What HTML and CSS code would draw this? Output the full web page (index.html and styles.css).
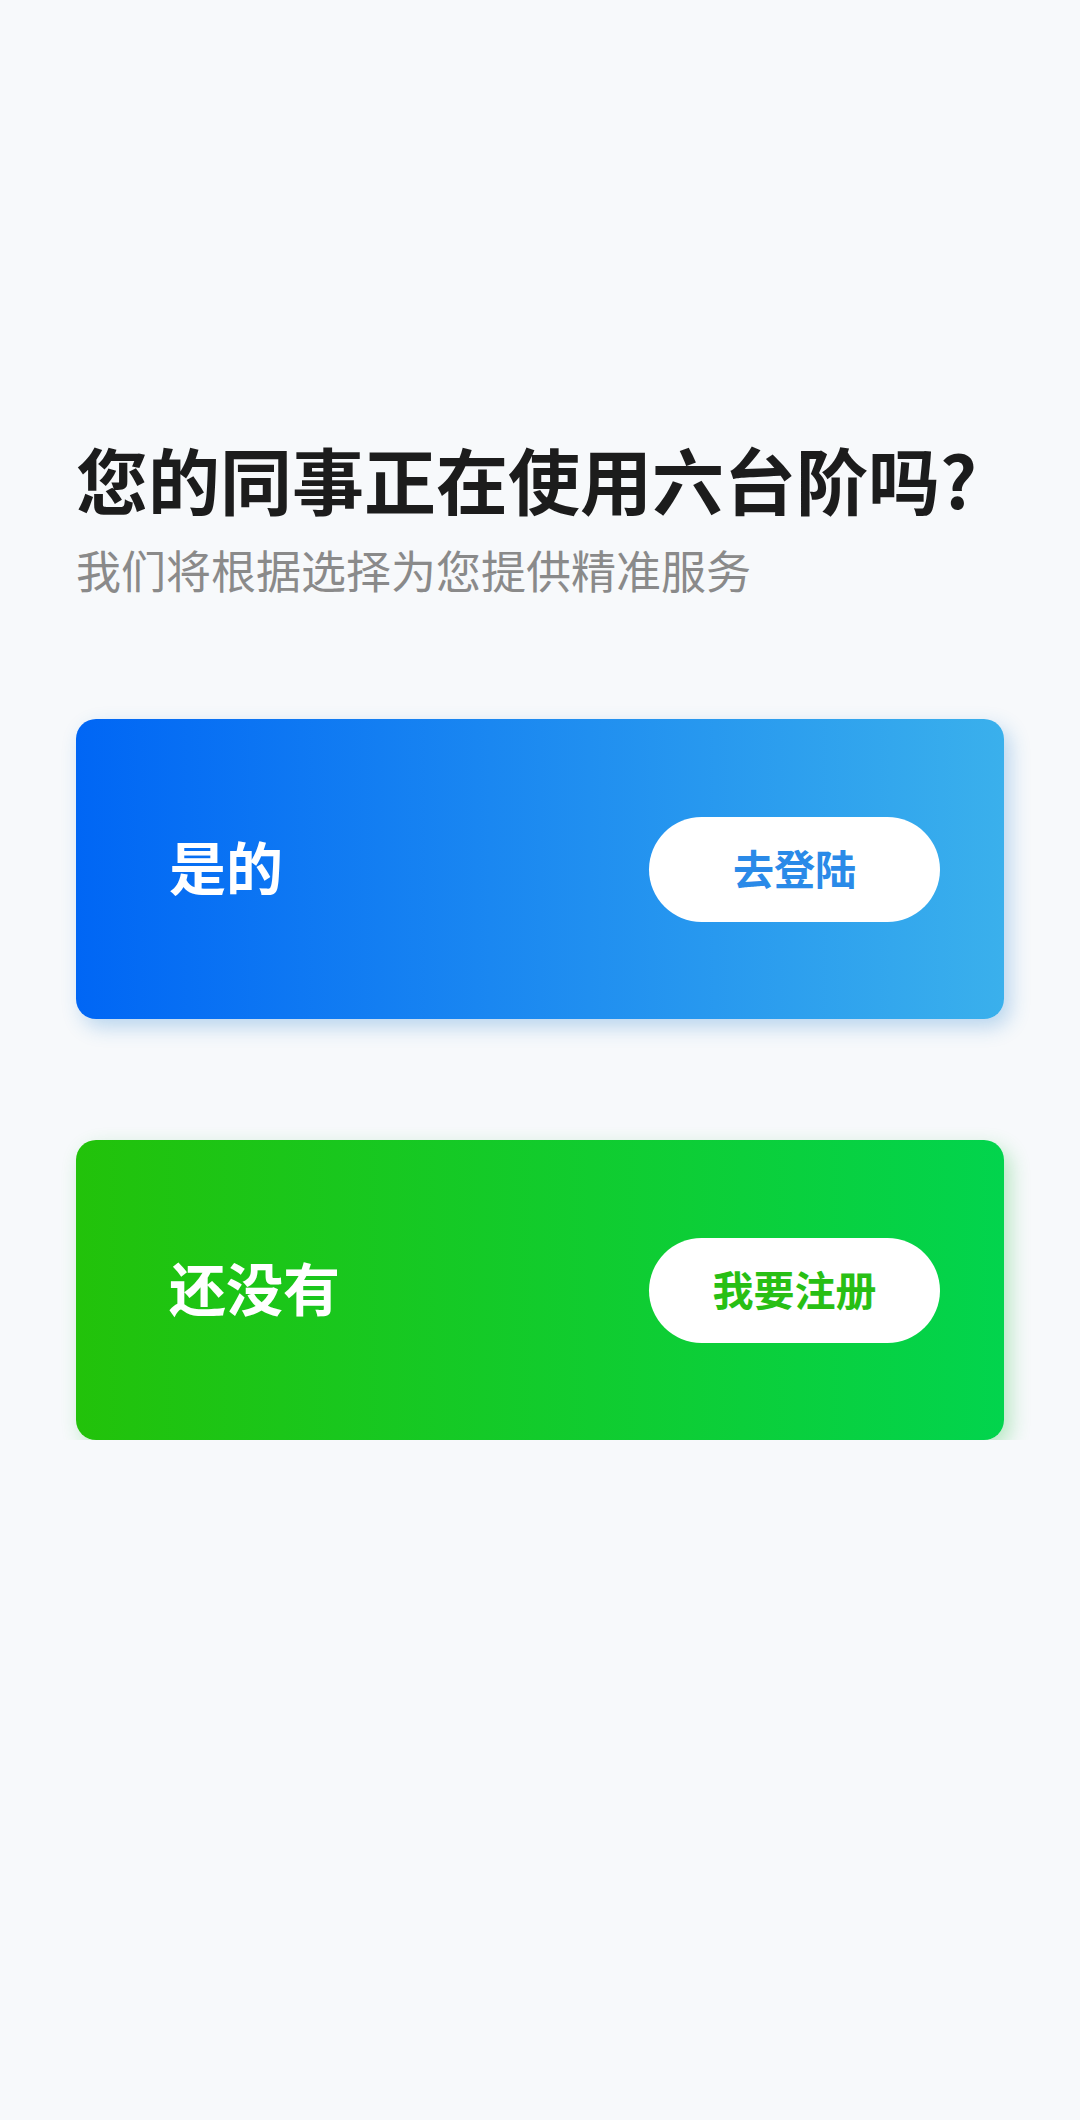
FILE: index.html
```html
<!DOCTYPE html>
<html lang="zh-CN">
<head>
  <meta charset="UTF-8">
  <title>选择 | 六台阶</title>
  <meta name="viewport" content="width=device-width, initial-scale=1.0">
  <link rel="stylesheet" href="styles.css">
</head>
<body>
  <div class="page">
    <h1 class="title">您的同事正在使用六台阶吗?</h1>
    <p class="subtitle">我们将根据选择为您提供精准服务</p>
    <div class="choices">
      <div class="choice choice-yes">
        <span class="choice-label">是的</span>
        <button class="choice-btn">去登陆</button>
      </div>
      <div class="choice choice-no">
        <span class="choice-label">还没有</span>
        <button class="choice-btn">我要注册</button>
      </div>
    </div>
  </div>
</body>
</html>
```

FILE: styles.css
```css
body { margin: 0; padding: 0; background: #f7f9fb; font-family: "Noto Sans CJK SC", "Noto Sans", sans-serif; }
.page { padding: 435px 76px 0 76px; }
.title { margin: 0; font-size: 72px; line-height: 86px; font-weight: 700; color: #1c1c1c; }
.subtitle { margin: 21px 0 0 0; font-size: 45px; line-height: 56px; color: #8a8a8a; }
.choices { display: flex; flex-direction: column; gap: 121px; margin-top: 121px; }
.choice {
  height: 300px; border-radius: 20px;
  display: flex; align-items: center; justify-content: space-between;
  padding: 0 64px 0 93px;
}
.choice-yes { background: linear-gradient(90deg, #0066f5 0%, #3ab0ec 100%); box-shadow: 6px 8px 20px rgba(40, 130, 210, 0.3); }
.choice-no { background: linear-gradient(90deg, #22c20a 0%, #02d44d 100%); box-shadow: 6px 8px 20px rgba(30, 190, 60, 0.3); }
.choice-label { color: #fff; font-size: 57px; font-weight: 700; padding-bottom: 8px; }
.choice-btn {
  width: 291px; height: 105px; border: none; border-radius: 53px;
  padding: 0 0 5px 0;
  background: #fff; font-family: inherit; font-size: 41px; font-weight: 700;
  cursor: pointer;
}
.choice-yes .choice-btn { color: #2a8ae8; }
.choice-no .choice-btn { color: #28bf14; }
```
